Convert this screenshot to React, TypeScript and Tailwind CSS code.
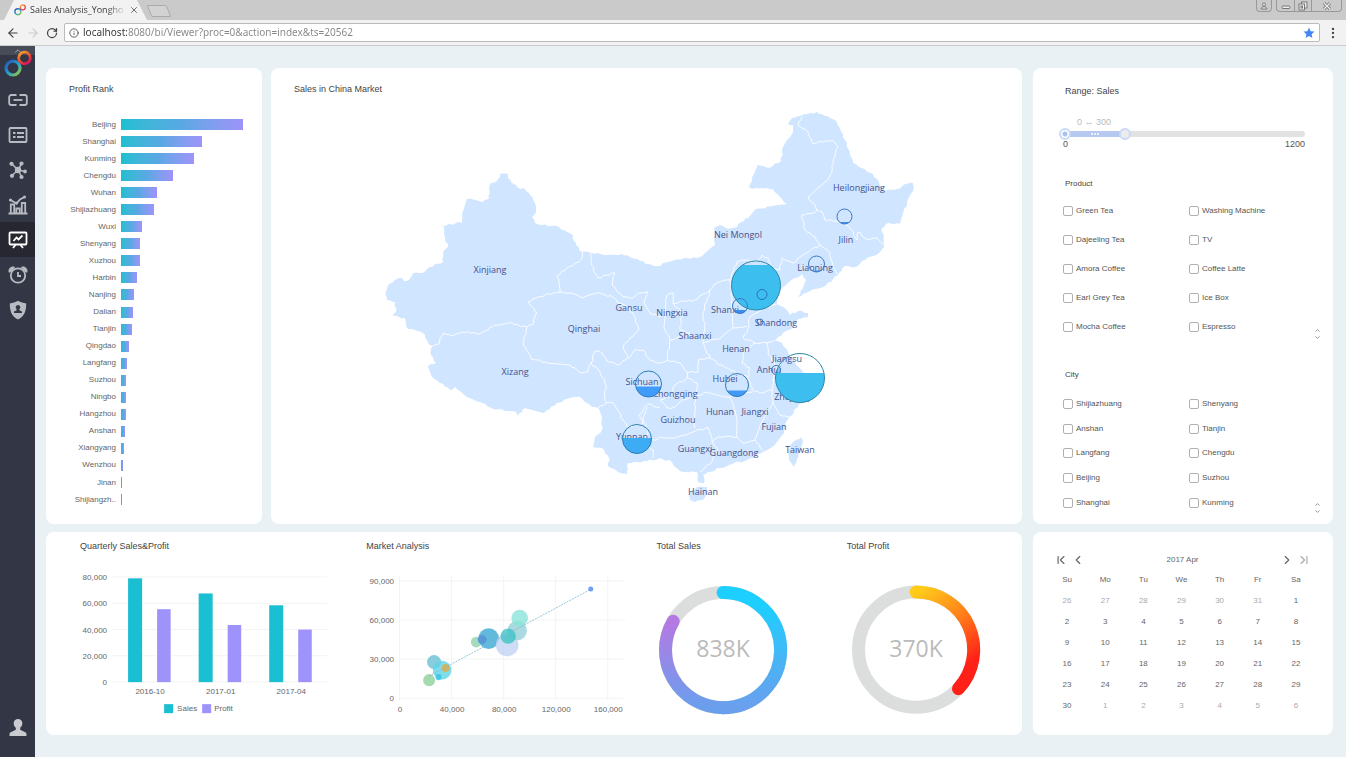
import type { ReactNode } from "react"
import {
  ArrowLeft,
  ArrowRight,
  ChevronDown,
  ChevronFirst,
  ChevronLast,
  ChevronLeft,
  ChevronRight,
  ChevronUp,
  EllipsisVertical,
  Info,
  RotateCw,
  X,
} from "lucide-react"

type Point = [number, number]

const profitRank = [
  { city: "Beijing", value: 122 },
  { city: "Shanghai", value: 81 },
  { city: "Kunming", value: 73 },
  { city: "Chengdu", value: 52 },
  { city: "Wuhan", value: 36 },
  { city: "Shijiazhuang", value: 33 },
  { city: "Wuxi", value: 21 },
  { city: "Shenyang", value: 19 },
  { city: "Xuzhou", value: 19 },
  { city: "Harbin", value: 16 },
  { city: "Nanjing", value: 13 },
  { city: "Dalian", value: 12 },
  { city: "Tianjin", value: 11 },
  { city: "Qingdao", value: 8 },
  { city: "Langfang", value: 6 },
  { city: "Suzhou", value: 5 },
  { city: "Ningbo", value: 5 },
  { city: "Hangzhou", value: 5 },
  { city: "Anshan", value: 4 },
  { city: "Xiangyang", value: 3 },
  { city: "Wenzhou", value: 2 },
  { city: "Jinan", value: 1.5 },
  { city: "Shijiangzh..", value: 1 },
]

const products = [
  "Green Tea",
  "Washing Machine",
  "Dajeeling Tea",
  "TV",
  "Amora Coffee",
  "Coffee Latte",
  "Earl Grey Tea",
  "Ice Box",
  "Mocha Coffee",
  "Espresso",
]

const cities = [
  "Shijiazhuang",
  "Shenyang",
  "Anshan",
  "Tianjin",
  "Langfang",
  "Chengdu",
  "Beijing",
  "Suzhou",
  "Shanghai",
  "Kunming",
]

const quarters = [
  { name: "2016-10", sales: 79000, profit: 55500 },
  { name: "2017-01", sales: 67500, profit: 43500 },
  { name: "2017-04", sales: 58500, profit: 40000 },
]

const weekDays = ["Su", "Mo", "Tu", "We", "Th", "Fr", "Sa"]

// six weeks, starting on Sunday 26 March
const weeks = Array.from({ length: 6 }, (_, week) =>
  Array.from({ length: 7 }, (_, day) => {
    const n = week * 7 + day - 5
    if (n < 1) return { label: n + 31, current: false }
    if (n > 30) return { label: n - 30, current: false }
    return { label: n, current: true }
  })
)

/* ---------- map shapes ---------- */

const mainland =
  "386,292 388,285 397,279 402,278 404,281 409,280 413,273 423,273 430,267 443,262 443,252 448,247 444,233 444,227 440,227 456,223 462,223 462,215 467,199 482,202 489,199 489,187 491,183 496,182 500,177 500,174 508,174 508,178 518,188 524,188 529,193 535,203 536,212 532,217 535,223 542,225 557,226 567,232 573,235 574,241 582,252 591,253 607,255 622,254 630,257 640,261 648,264 657,266 675,260 700,257 715,245 714,238 715,227 720,225 728,229 737,227 741,222 748,218 756,209 773,206 787,204 780,197 773,189 762,188 752,189 749,187 755,172 758,165 768,168 781,161 782,150 787,140 793,132 793,125 788,124 792,118 800,116 807,114 817,112 827,116 835,120 840,128 845,140 850,155 853,163 862,168 873,174 879,183 885,191 897,189 907,184 913,183 913,191 907,203 900,224 888,223 882,228 884,247 879,253 867,258 856,267 845,266 838,275 823,287 810,291 798,297 803,288 806,280 802,274 795,278 783,287 777,293 777,304 786,309 790,315 798,311 808,313 808,317 798,319 793,327 783,333 773,341 782,343 788,352 795,363 803,372 805,377 804,390 803,400 797,408 789,417 785,425 784,433 780,438 772,447 763,452 747,460 732,464 720,468 708,472 703,475 704,483 698,482 698,475 697,472 683,472 675,467 672,462 660,458 647,461 628,463 627,474 618,472 608,466 609,458 602,448 593,447 595,437 602,430 602,417 598,408 592,407 587,403 580,397 567,399 557,403 544,413 525,408 518,416 516,412 493,409 480,402 467,397 455,387 450,390 440,383 432,377 428,366 436,363 431,355 432,346 428,343 423,333 408,329 405,318 393,316 396,312 395,302 387,300"

const islands = [
  "689,493 697,487 707,487 708,492 703,500 695,502 690,500",
  "802,437 803,442 798,457 794,467 789,460 788,450 793,442",
]

const borders = [
  "582,252 581,260 567,268 557,276 560,292",
  "560,292 553,293 533,299 528,302 537,313 533,320 534,323 527,327 508,323 495,325 480,334 462,332 453,336 443,333 439,344 430,346",
  "560,292 570,293 582,298 600,293 613,297 618,303 627,307 633,313 639,330 630,338 623,346 628,358",
  "527,327 523,343 531,359 548,363 570,365 582,373 588,372 591,363 595,351 602,353 607,361 618,365 628,358",
  "591,363 600,372 605,383 606,403 598,408",
  "606,403 613,403 623,420 628,428 637,425 643,423 639,415 648,404 660,408",
  "591,253 591,263 598,278 615,273 612,285 623,297 633,298 638,293 648,292 644,303 650,313 660,317 665,313",
  "628,358 635,350 643,350 650,360 660,363 667,360 670,340 665,330 665,307 667,295 673,293 673,303 682,313 680,330 690,333 670,340",
  "673,303 695,300 710,290 703,313 705,330 703,343 710,358 698,360 698,372 687,372 680,363 667,360",
  "710,290 717,283 730,280 737,262 742,260 757,262 762,255 768,258 770,267 780,270 782,258 793,263 807,253 820,245",
  "820,245 830,253 833,267 837,274",
  "820,245 815,237 805,230 802,215 813,213 817,210 813,203 808,197 825,182 832,172 833,160 838,147 832,140 812,143 808,132 798,125 802,117",
  "817,210 822,212 825,220 842,222 850,228 857,240 858,232 868,240 877,238 883,245",
  "730,280 732,300 733,328 722,337 703,343",
  "777,304 763,308 750,317 747,333 743,338 755,343 767,343 773,341",
  "733,328 747,326",
  "755,343 743,353 742,363 750,368 748,377 720,365 710,358",
  "767,343 768,353 777,367 773,380 787,382 797,376",
  "748,377 752,390 760,393 772,390 773,380",
  "695,397 707,392 730,397 752,392",
  "687,372 687,378 697,383 695,397 695,410 695,428",
  "687,378 673,387 670,397 660,400 667,408 675,407 680,402 690,398",
  "648,407 643,417 648,433 643,443 653,450 653,458",
  "647,443 660,437 675,438 690,433 708,427 712,442 718,437 737,437 743,443 755,440",
  "730,397 737,420 737,437",
  "772,390 773,403 762,422 755,440 763,450",
  "773,403 780,415 789,417",
  "712,442 718,450 712,462 700,472",
]

const provinces: { name: string; x: number; y: number }[] = [
  { name: "Heilongjiang", x: 859, y: 188 },
  { name: "Jilin", x: 846, y: 240 },
  { name: "Liaoning", x: 815, y: 268 },
  { name: "Nei Mongol", x: 738, y: 235 },
  { name: "Xinjiang", x: 490, y: 270 },
  { name: "Gansu", x: 629, y: 308 },
  { name: "Ningxia", x: 672, y: 313 },
  { name: "Shanxi", x: 725, y: 310 },
  { name: "Shandong", x: 776, y: 323 },
  { name: "Qinghai", x: 584, y: 329 },
  { name: "Shaanxi", x: 695, y: 336 },
  { name: "Henan", x: 736, y: 349 },
  { name: "Jiangsu", x: 787, y: 359 },
  { name: "Anhui", x: 769, y: 370 },
  { name: "Xizang", x: 515, y: 372 },
  { name: "Sichuan", x: 642, y: 382 },
  { name: "Hubei", x: 725, y: 379 },
  { name: "Chongqing", x: 675, y: 394 },
  { name: "Zhejiang", x: 792, y: 397 },
  { name: "Hunan", x: 720, y: 412 },
  { name: "Jiangxi", x: 755, y: 412 },
  { name: "Guizhou", x: 678, y: 420 },
  { name: "Fujian", x: 774, y: 427 },
  { name: "Yunnan", x: 632, y: 437 },
  { name: "Guangxi", x: 695, y: 449 },
  { name: "Guangdong", x: 734, y: 453 },
  { name: "Taiwan", x: 800, y: 450 },
  { name: "Hainan", x: 703, y: 492 },
]

// level is the y of the liquid surface
const bubbles = [
  { id: "beijing", x: 756, y: 285.5, r: 24.5, level: 265, color: "#3cbfef", stroke: "#2b86a8" },
  { id: "tianjin", x: 762, y: 294.5, r: 5, level: 300, color: "#3b8df0", stroke: "#2b6fc0" },
  { id: "shijiazhuang", x: 740, y: 306, r: 7.5, level: 310, color: "#3b8df0", stroke: "#3b78c4" },
  { id: "jinan", x: 760, y: 322, r: 3, level: 326, color: "#3b8df0", stroke: "#3b78c4" },
  { id: "shenyang", x: 816.5, y: 264, r: 8, level: 270.5, color: "#3b8df0", stroke: "#3b78c4" },
  { id: "harbin", x: 844.5, y: 216.5, r: 7.5, level: 222, color: "#3b8df0", stroke: "#3b78c4" },
  { id: "nanjing", x: 776, y: 370, r: 4.5, level: 375, color: "#3b8df0", stroke: "#3b78c4" },
  { id: "shanghai", x: 800, y: 378, r: 24.5, level: 373, color: "#3cbfef", stroke: "#2b86a8" },
  { id: "wuhan", x: 737, y: 385, r: 11.5, level: 390.5, color: "#4299f6", stroke: "#2f7bb8" },
  { id: "chengdu", x: 648.5, y: 384, r: 13, level: 386.5, color: "#3f9cf8", stroke: "#2f7bb8" },
  { id: "kunming", x: 637, y: 439, r: 14.5, level: 438, color: "#3dacf5", stroke: "#2b7cae" },
]

const parsePoints = (text: string): Point[] =>
  text.split(" ").map((pair) => pair.split(",").map(Number) as Point)

// breaks every long segment in small steps so that coasts and borders look natural
const roughen = (points: Point[], amount: number, closed = false) => {
  const out: string[] = []
  const last = closed ? points.length : points.length - 1
  for (let i = 0; i < last; i++) {
    const [x1, y1] = points[i]
    const [x2, y2] = points[(i + 1) % points.length]
    const length = Math.hypot(x2 - x1, y2 - y1) || 1
    const steps = Math.max(1, Math.round(length / 3))
    for (let s = 0; s < steps; s++) {
      const t = s / steps
      const seed = Math.sin(x1 * 12.9 + y1 * 78.2 + s * 37.7) * 43758.5
      const shift = s === 0 ? 0 : (seed - Math.floor(seed) - 0.5) * 2 * amount
      const x = x1 + (x2 - x1) * t - ((y2 - y1) / length) * shift
      const y = y1 + (y2 - y1) * t + ((x2 - x1) / length) * shift
      out.push(`${x.toFixed(1)} ${y.toFixed(1)}`)
    }
  }
  if (!closed) out.push(points[points.length - 1].join(" "))
  return `M${out.join("L")}${closed ? "Z" : ""}`
}

/* ---------- browser frame ---------- */

const Logo = ({ className }: { className?: string }) => (
  <svg viewBox="0 0 28 28" className={className} fill="none" aria-hidden="true">
    <defs>
      <linearGradient id="logo-blue" x1="0" y1="0" x2="1" y2="1">
        <stop offset="0" stopColor="#2a4fb8" />
        <stop offset="0.5" stopColor="#1d9fd0" />
        <stop offset="1" stopColor="#9ccb3a" />
      </linearGradient>
      <linearGradient id="logo-red" x1="0" y1="0" x2="0.6" y2="1">
        <stop offset="0" stopColor="#f3b02c" />
        <stop offset="0.5" stopColor="#ee5a2a" />
        <stop offset="1" stopColor="#e3165b" />
      </linearGradient>
    </defs>
    <circle cx="9" cy="18" r="7" stroke="url(#logo-blue)" strokeWidth="3.2" />
    <circle cx="20.5" cy="8" r="5.8" stroke="url(#logo-red)" strokeWidth="2.8" />
  </svg>
)

const WindowControls = () => (
  <div className="flex items-start gap-1 pr-1 text-[#777]">
    <button aria-label="Profile" className="flex h-3 w-4 items-center justify-center rounded-b-sm border border-t-0 border-[#999]">
      <svg viewBox="0 0 8 8" className="size-2" fill="#eee" stroke="currentColor">
        <circle cx="4" cy="2.5" r="1.5" />
        <path d="M1 7c0-3 6-3 6 0z" />
      </svg>
    </button>
    <div className="flex h-3 divide-x divide-[#999] rounded-b-sm border border-t-0 border-[#999]">
      <button aria-label="Minimize" className="flex w-[18px] items-center justify-center">
        <svg viewBox="0 0 10 8" className="h-2 w-2.5" fill="#eee" stroke="currentColor">
          <rect x="1" y="4" width="8" height="2.5" rx="1" />
        </svg>
      </button>
      <button aria-label="Restore" className="flex w-[17px] items-center justify-center">
        <svg viewBox="0 0 10 10" className="size-2.5" fill="#eee" stroke="currentColor">
          <rect x="3.5" y="1" width="5.5" height="6" />
          <rect x="1" y="3" width="5.5" height="6" />
          <rect x="3" y="5" width="1.5" height="2" />
        </svg>
      </button>
      <button aria-label="Close window" className="flex w-[29px] items-center justify-center">
        <svg viewBox="0 0 10 8" className="h-2 w-2.5" fill="none">
          <path d="M2 1l6 6M8 1L2 7" stroke="#777" strokeWidth="3" />
          <path d="M2 1l6 6M8 1L2 7" stroke="#eee" strokeWidth="1.2" />
        </svg>
      </button>
    </div>
  </div>
)

const BrowserBar = () => (
  <header className="font-['Open_Sans',sans-serif]">
    <div className="flex h-5 items-stretch justify-between bg-[#cacaca]">
      <div className="flex pl-1">
        <div className="flex w-[143px] items-center gap-1 bg-[#f2f2f2] pr-2 pl-2.5 [clip-path:polygon(10px_0,133px_0,143px_100%,0_100%)]">
          <Logo className="size-3 shrink-0" />
          <span className="flex-1 bg-linear-to-r from-[#333] from-80% to-[#ddd] bg-clip-text text-[9px] whitespace-nowrap text-transparent">
            Sales Analysis_Yongho
          </span>
          <button aria-label="Close tab" className="shrink-0">
            <X className="size-2.5 text-[#555]" />
          </button>
        </div>
        <button aria-label="New tab" className="mt-[5px] ml-0.5 h-3 w-5 skew-x-[22deg] rounded-xs border border-[#aaa] bg-[#d2d2d2]" />
      </div>
      <WindowControls />
    </div>
    <div className="flex h-[26px] items-center border-b border-[#c8cccf] bg-[#f2f2f2] px-1.5">
      <button aria-label="Back" className="mr-1.5">
        <ArrowLeft className="size-3.5 text-[#444]" />
      </button>
      <button aria-label="Forward" className="mr-1.5">
        <ArrowRight className="size-3.5 text-[#ccc]" />
      </button>
      <button aria-label="Reload" className="mr-1.5">
        <RotateCw className="size-3 text-[#444]" strokeWidth={2.5} />
      </button>
      <div className="flex h-[19px] flex-1 items-center gap-1 rounded-xs border border-[#bbb] bg-white px-1">
        <Info className="size-2.5 text-[#444]" />
        <input
          aria-label="Address"
          defaultValue="localhost:8080/bi/Viewer?proc=0&action=index&ts=20562"
          className="min-w-0 flex-1 bg-[linear-gradient(90deg,#333_44px,#858585_44px)] bg-clip-text font-['Noto_Sans',sans-serif] text-[10px] text-transparent outline-none"
        />
        <button aria-label="Bookmark">
          <svg viewBox="0 0 12 12" className="size-3" fill="#4285f4">
            <path d="M6 .6l1.6 3.6 3.9.4-2.9 2.6.8 3.9L6 9.1l-3.4 2 .8-3.9L.5 4.6l3.9-.4z" />
          </svg>
        </button>
      </div>
      <button aria-label="Menu" className="ml-1.5">
        <EllipsisVertical className="size-3.5 text-[#444]" />
      </button>
    </div>
  </header>
)

/* ---------- sidebar ---------- */

const menu: { label: string; icon: ReactNode; active?: boolean }[] = [
  {
    label: "Connections",
    icon: (
      <>
        <path d="M8.500 5H3.200a2 2 0 0 0-2 2v6a2 2 0 0 0 2 2H8.500M11.500 5h5.300a2 2 0 0 1 2 2v6a2 2 0 0 1-2 2H11.500" />
        <path d="M5.500 10h9" />
      </>
    ),
  },
  {
    label: "Data sets",
    icon: (
      <>
        <rect x="1.5" y="3" width="17" height="14" rx="1" />
        <path d="M5 8h2.500M9 8h7M5 12h2.500M9 12h7" />
      </>
    ),
  },
  {
    label: "Models",
    icon: (
      <>
        <path d="M10 10L4 4M10 10l3.500-6M10 10l7 1.500M10 10l3.500 6.500M10 10l-6 5.500" strokeWidth="1.5" />
        <g fill="currentColor" stroke="none">
          <circle cx="10" cy="10" r="3.2" />
          <circle cx="3.500" cy="3.800" r="2.100" />
          <circle cx="13.500" cy="3.500" r="2.100" />
          <circle cx="17" cy="11.500" r="1.900" />
          <circle cx="13.500" cy="17" r="2.100" />
          <circle cx="4" cy="15.800" r="2.100" />
        </g>
      </>
    ),
  },
  {
    label: "Charts",
    icon: (
      <>
        <path d="M.5 18.500h19M2.800 18V9.500h3.400V18M8.300 18v-4.500h3.400V18M13.800 18V8h3.400v10" />
        <path d="M2.500 5l6 3.500 3.500-4 4.500-2.500" />
        <g fill="currentColor" stroke="none">
          <circle cx="2.500" cy="5" r="1.600" />
          <circle cx="8.500" cy="8" r="1.600" />
          <circle cx="16.500" cy="2" r="1.600" />
        </g>
      </>
    ),
  },
  {
    label: "Dashboards",
    active: true,
    icon: (
      <>
        <rect x="1.500" y="2.500" width="17" height="12" rx="1" />
        <path d="M5.500 11l3-3.500 2 2 4-4M7.500 15l-2.500 3M12.500 15l2.500 3" />
      </>
    ),
  },
  {
    label: "Schedules",
    icon: (
      <>
        <circle cx="10" cy="10.500" r="7.200" />
        <path d="M10 7v4h3" />
        <path d="M1.200 7.200C.2 4 3 1 6.500 2.200L2 7zM18.800 7.200c1-3.200-1.800-6.200-5.300-5L18 7z" fill="currentColor" strokeWidth="1" />
      </>
    ),
  },
  {
    label: "Security",
    icon: (
      <>
        <path d="M10 .8c2.500 1.500 5.500 2.400 8.200 2.600 0 7.600-1.700 13-8.200 16-6.500-3-8.200-8.400-8.200-16C4.500 3.200 7.500 2.300 10 .8z" fill="currentColor" stroke="none" />
        <path d="M10 5a2.300 2.300 0 0 1 1.300 4.200l.3 1.300 2.400 1v1.500H6v-1.500l2.400-1 .3-1.300A2.300 2.300 0 0 1 10 5z" fill="#333644" stroke="none" />
      </>
    ),
  },
]

const Sidebar = () => (
  <nav className="flex w-[35px] flex-col bg-[#333644] text-[#b9bbc2]">
    <div className="relative h-9">
      <div className="h-[9px] bg-[#484b58]">
        <ChevronUp className="mx-auto size-2.5" />
      </div>
      <Logo className="absolute top-1 left-1 size-7" />
    </div>
    {menu.map((item) => (
      <a
        key={item.label}
        href="#"
        aria-label={item.label}
        className={`flex h-[35px] items-center justify-center ${item.active ? "bg-[#262730] text-white" : ""}`}
      >
        <svg viewBox="0 0 20 20" className="size-5" fill="none" stroke="currentColor" strokeWidth="1.8">
          {item.icon}
        </svg>
      </a>
    ))}
    <a href="#" aria-label="Account" className="mt-auto flex justify-center pb-5">
      <svg viewBox="0 0 18 18" className="size-[18px]" fill="#c9cbd0">
        <path d="M9 0a4.300 4.300 0 0 1 4.300 4.500c0 2-1 3.500-2.100 4.300v2l5.500 2.700c.7.400.8 1 .8 3.500H.5c0-2.500.1-3.100.8-3.500l5.500-2.700v-2C5.700 8 4.700 6.500 4.700 4.500A4.300 4.300 0 0 1 9 0z" />
      </svg>
    </a>
  </nav>
)

/* ---------- cards ---------- */

const ProfitRank = () => (
  <section className="flex w-[216px] flex-col rounded-lg bg-white pt-3.5 pb-4 pl-[23px]">
    <h2 className="text-[9px] leading-[14px] text-[#444]">Profit Rank</h2>
    <ul className="mt-5 flex flex-1 flex-col pr-[19px]">
      {profitRank.map((row) => (
        <li key={row.city} className="flex flex-1 items-center gap-[5px]">
          <span className="w-[47px] text-right text-[8px] leading-none whitespace-nowrap text-[#666]">
            {row.city}
          </span>
          <div className="flex-1">
            <div
              className="h-[11px] bg-linear-to-r from-[#1bbfd0] via-[#58a8e4] to-[#9d93fa]"
              style={{ width: `${(row.value / 122) * 100}%` }}
            />
          </div>
        </li>
      ))}
    </ul>
  </section>
)

const ChinaMap = () => (
  <section className="min-w-0 flex-1 rounded-lg bg-white pt-3.5 pb-1">
    <h2 className="pl-[23px] text-[9px] leading-[14px] text-[#444]">Sales in China Market</h2>
    <svg viewBox="271 100 751 420" className="mt-1 w-full" role="img" aria-label="Sales by province">
      <g fill="#d0e5ff">
        <path d={roughen(parsePoints(mainland), 1, true)} />
        {islands.map((island) => (
          <path key={island} d={roughen(parsePoints(island), 0.7, true)} />
        ))}
      </g>
      <g fill="none" stroke="#fff" strokeWidth="0.9" strokeLinejoin="round">
        {borders.map((border) => (
          <path key={border} d={roughen(parsePoints(border), 1)} />
        ))}
      </g>
      <g fill="#45508c" textAnchor="middle" className="font-['Open_Sans',sans-serif] text-[9px]">
        {provinces.map((p) => (
          <text key={p.name} x={p.x} y={p.y + 3}>
            {p.name}
          </text>
        ))}
      </g>
      {bubbles.map((b) => (
        <g key={b.id}>
          <clipPath id={`liquid-${b.id}`}>
            <rect x={b.x - b.r} y={b.level} width={b.r * 2} height={b.r * 2} />
          </clipPath>
          <circle cx={b.x} cy={b.y} r={b.r} fill={b.color} clipPath={`url(#liquid-${b.id})`} />
          <circle cx={b.x} cy={b.y} r={b.r} fill="none" stroke={b.stroke} />
        </g>
      ))}
    </svg>
  </section>
)

const CheckList = ({ title, items, className }: { title: string; items: string[]; className: string }) => (
  <fieldset>
    <legend className="pl-0.5 text-[8px] leading-[14px] text-[#444]">{title}</legend>
    <div className="flex items-end">
      <div className={`grid flex-1 grid-cols-[126px_1fr] ${className}`}>
        {items.map((item) => (
          <label key={item} className="flex items-center gap-[3px] text-[8px] text-[#555]">
            <input type="checkbox" className="size-2.5 appearance-none rounded-xs border border-[#b0b0b0] checked:bg-[#b4c8f0]" />
            {item}
          </label>
        ))}
      </div>
      <button aria-label={`Scroll ${title}`} className="flex flex-col text-[#888]">
        <ChevronUp className="size-[7px]" strokeWidth={3} />
        <ChevronDown className="size-[7px]" strokeWidth={3} />
      </button>
    </div>
  </fieldset>
)

const rangeInput =
  "pointer-events-none col-start-1 row-start-1 -mx-1.5 h-3 appearance-none bg-transparent [&::-webkit-slider-thumb]:pointer-events-auto [&::-webkit-slider-thumb]:size-3 [&::-webkit-slider-thumb]:appearance-none [&::-webkit-slider-thumb]:rounded-full [&::-webkit-slider-thumb]:border-2 [&::-webkit-slider-thumb]:border-[#c9d9f8]"

const Filters = () => (
  <section className="rounded-lg bg-white pt-4 pr-3 pb-2 pl-[30px]">
    <div className="pr-4 pl-0.5">
      <h2 className="text-[9px] leading-[14px] text-[#444]">Range: Sales</h2>
      <p className="mt-[18px] pl-3 text-[9px] leading-3 text-[#bbb]">0 ↔ 300</p>
      <div className="grid items-center">
        <div className="col-start-1 row-start-1 h-1.5 rounded-full bg-[#e2e2e2]">
          <div className="flex h-full w-1/4 items-center justify-center gap-px rounded-full bg-[#b4c8f0]">
            <i className="size-0.5 bg-white/70" />
            <i className="size-0.5 bg-white/70" />
            <i className="size-0.5 bg-white/70" />
          </div>
        </div>
        <input
          type="range"
          aria-label="Minimum sales"
          min={0}
          max={1200}
          defaultValue={0}
          className={`${rangeInput} [&::-webkit-slider-thumb]:bg-[radial-gradient(circle,#a9c1f2_2px,#fff_3px)]`}
        />
        <input
          type="range"
          aria-label="Maximum sales"
          min={0}
          max={1200}
          defaultValue={300}
          className={`${rangeInput} [&::-webkit-slider-thumb]:bg-[#ececec]`}
        />
      </div>
      <div className="flex justify-between text-[9px] leading-2 text-[#555]">
        <span className="-ml-0.5">0</span>
        <span>1200</span>
      </div>
    </div>
    <div className="mt-[29px]">
      <CheckList title="Product" items={products} className="mt-1.5 h-36" />
    </div>
    <div className="mt-[27px]">
      <CheckList title="City" items={cities} className="mt-2.5 h-[123px]" />
    </div>
  </section>
)

const QuarterlyChart = () => {
  const y = (value: number) => 129 - (value / 80000) * 105
  return (
    <svg viewBox="0 0 300 182" className="w-full text-[8px]" fill="#666" role="img" aria-label="Quarterly sales and profit">
      {[0, 20000, 40000, 60000, 80000].map((tick) => (
        <g key={tick}>
          <path d={`M66 ${y(tick)}H281`} stroke="#f3f3f3" />
          <text x="61" y={y(tick) + 3} textAnchor="end">
            {tick.toLocaleString("en-US")}
          </text>
        </g>
      ))}
      {quarters.map((q, i) => (
        <g key={q.name}>
          <rect x={82 + i * 70.5} y={y(q.sales)} width="14" height={129 - y(q.sales)} fill="#1abfd1" />
          <rect x={111 + i * 70.5} y={y(q.profit)} width="13.5" height={129 - y(q.profit)} fill="#9d93fa" />
          <text x={104 + i * 70.5} y="141" textAnchor="middle">
            {q.name}
          </text>
        </g>
      ))}
      <rect x="118" y="151" width="9" height="9" fill="#1abfd1" />
      <text x="131" y="158">Sales</text>
      <rect x="156" y="151" width="9" height="9" fill="#9d93fa" />
      <text x="168" y="158">Profit</text>
    </svg>
  )
}

const marketDots = [
  { x: 83, y: 127, r: 6, color: "#8fd19b" },
  { x: 88, y: 109, r: 7, color: "#6ac0d6" },
  { x: 96, y: 117, r: 9.3, color: "#5fd5e3" },
  { x: 92.5, y: 124, r: 3, color: "#35c3ea" },
  { x: 99.5, y: 115, r: 4, color: "#e0ab45" },
  { x: 130, y: 89, r: 5.3, color: "#8fd3ad" },
  { x: 142.5, y: 85.5, r: 10.3, color: "#3aa8d2" },
  { x: 136, y: 86.5, r: 4.5, color: "#5a8fd6" },
  { x: 161, y: 92, r: 11.3, color: "#c2d3f3" },
  { x: 171, y: 77.5, r: 9.7, color: "#96cfd8" },
  { x: 162, y: 83, r: 7.7, color: "#3fc3c6" },
  { x: 173.5, y: 65, r: 8.3, color: "#8be3da" },
]

const MarketChart = () => (
  <svg viewBox="0 0 296 182" className="w-full text-[8px]" fill="#666" role="img" aria-label="Market analysis">
    {[90000, 60000, 30000, 0].map((tick, i) => (
      <g key={tick}>
        <path d={`M53 ${28 + i * 39}H279`} stroke="#f3f3f3" />
        <text x="48" y={31 + i * 39} textAnchor="end">
          {tick.toLocaleString("en-US")}
        </text>
      </g>
    ))}
    {[0, 40000, 80000, 120000, 160000].map((tick, i) => (
      <g key={tick}>
        <path d={`M${53.5 + i * 52} 23V147`} stroke="#f3f3f3" />
        <text x={54 + i * 52} y="159" textAnchor="middle">
          {tick.toLocaleString("en-US")}
        </text>
      </g>
    ))}
    {marketDots.map((dot) => (
      <circle key={`${dot.x}-${dot.y}`} cx={dot.x} cy={dot.y} r={dot.r} fill={dot.color} fillOpacity="0.8" />
    ))}
    <path d="M83 123L245 36" stroke="#7db9d3" strokeDasharray="2 1" strokeWidth="0.8" />
    <circle cx="244.5" cy="36" r="2.5" fill="#6f9ff8" />
  </svg>
)

const SalesRing = () => (
  <svg viewBox="0 0 190 182" className="w-full" fill="none" role="img" aria-label="Total sales 838K">
    <defs>
      <linearGradient id="sales-right" x1="0" y1="0" x2="0" y2="1">
        <stop offset="0.1" stopColor="#1dcfff" />
        <stop offset="1" stopColor="#6a9fee" />
      </linearGradient>
      <linearGradient id="sales-left" x1="0" y1="0" x2="0" y2="1">
        <stop offset="0" stopColor="#b579e2" />
        <stop offset="1" stopColor="#6a9fee" />
      </linearGradient>
    </defs>
    <circle cx="80" cy="97" r="57.5" stroke="#dcdedd" strokeWidth="13" />
    <path d="M30.200 68.200A57.500 57.500 0 0 0 80 154.500" stroke="url(#sales-left)" strokeWidth="13" strokeLinecap="round" />
    <path d="M80 39.500A57.500 57.500 0 0 1 80 154.500" stroke="url(#sales-right)" strokeWidth="13" strokeLinecap="round" />
    <text x="80" y="104" textAnchor="middle" fill="#bbb" className="font-['Open_Sans',sans-serif] text-[23px]">
      838K
    </text>
  </svg>
)

const ProfitRing = () => (
  <svg viewBox="0 0 189 182" className="w-full" fill="none" role="img" aria-label="Total profit 370K">
    <defs>
      <linearGradient id="profit-arc" x1="0" y1="0" x2="0.4" y2="1">
        <stop offset="0" stopColor="#ffcc1a" />
        <stop offset="0.5" stopColor="#ff7a1a" />
        <stop offset="0.95" stopColor="#ff2118" />
      </linearGradient>
    </defs>
    <circle cx="83" cy="96.5" r="57.5" stroke="#dcdedd" strokeWidth="13" />
    <path d="M83 39A57.500 57.500 0 0 1 125.300 135.500" stroke="url(#profit-arc)" strokeWidth="13" strokeLinecap="round" />
    <text x="83" y="104" textAnchor="middle" fill="#bbb" className="font-['Open_Sans',sans-serif] text-[23px]">
      370K
    </text>
  </svg>
)

const Summary = () => (
  <section className="grid grid-cols-[300fr_296fr_190fr_189fr] rounded-lg bg-white pt-[7px] text-[9px] leading-[14px] text-[#444]">
    <div>
      <h2 className="pl-[34px]">Quarterly Sales&amp;Profit</h2>
      <QuarterlyChart />
    </div>
    <div>
      <h2 className="pl-5">Market Analysis</h2>
      <MarketChart />
    </div>
    <div>
      <h2 className="pl-3.5">Total Sales</h2>
      <SalesRing />
    </div>
    <div>
      <h2 className="pl-3.5">Total Profit</h2>
      <ProfitRing />
    </div>
  </section>
)

const Calendar = () => (
  <section className="rounded-lg bg-white pt-[19px] pr-[18px] pb-[18px] pl-[15px] text-[8px] text-[#666]">
    <div className="flex h-[18px] items-center gap-[3px] pr-1 pl-1.5">
      <button aria-label="Previous year">
        <ChevronFirst className="size-3.5" />
      </button>
      <button aria-label="Previous month">
        <ChevronLeft className="size-3.5" />
      </button>
      <h2 className="flex-1 text-center">2017 Apr</h2>
      <button aria-label="Next month">
        <ChevronRight className="size-3.5" />
      </button>
      <button aria-label="Next year" className="text-[#aaa]">
        <ChevronLast className="size-3.5" />
      </button>
    </div>
    <table className="w-full table-fixed text-center leading-none">
      <thead>
        <tr className="h-[21px]">
          {weekDays.map((day) => (
            <th key={day} className="font-normal">
              {day}
            </th>
          ))}
        </tr>
      </thead>
      <tbody>
        {weeks.map((week, i) => (
          <tr key={i} className="h-[21px]">
            {week.map((day) => (
              <td key={day.label} className={day.current ? "" : "text-[#aaa]"}>
                {day.label}
              </td>
            ))}
          </tr>
        ))}
      </tbody>
    </table>
  </section>
)

export default function App() {
  return (
    <div className="flex min-h-screen flex-col bg-[#e9f1f5] font-['Liberation_Sans',Arial,sans-serif]">
      <BrowserBar />
      <div className="flex flex-1">
        <Sidebar />
        <main className="grid min-w-0 flex-1 grid-cols-[minmax(0,1fr)_300px] content-start gap-x-[11px] gap-y-2 pt-[22px] pr-[13px] pb-[22px] pl-[11px]">
          <div className="flex gap-[9px]">
            <ProfitRank />
            <ChinaMap />
          </div>
          <Filters />
          <Summary />
          <Calendar />
        </main>
      </div>
    </div>
  )
}
